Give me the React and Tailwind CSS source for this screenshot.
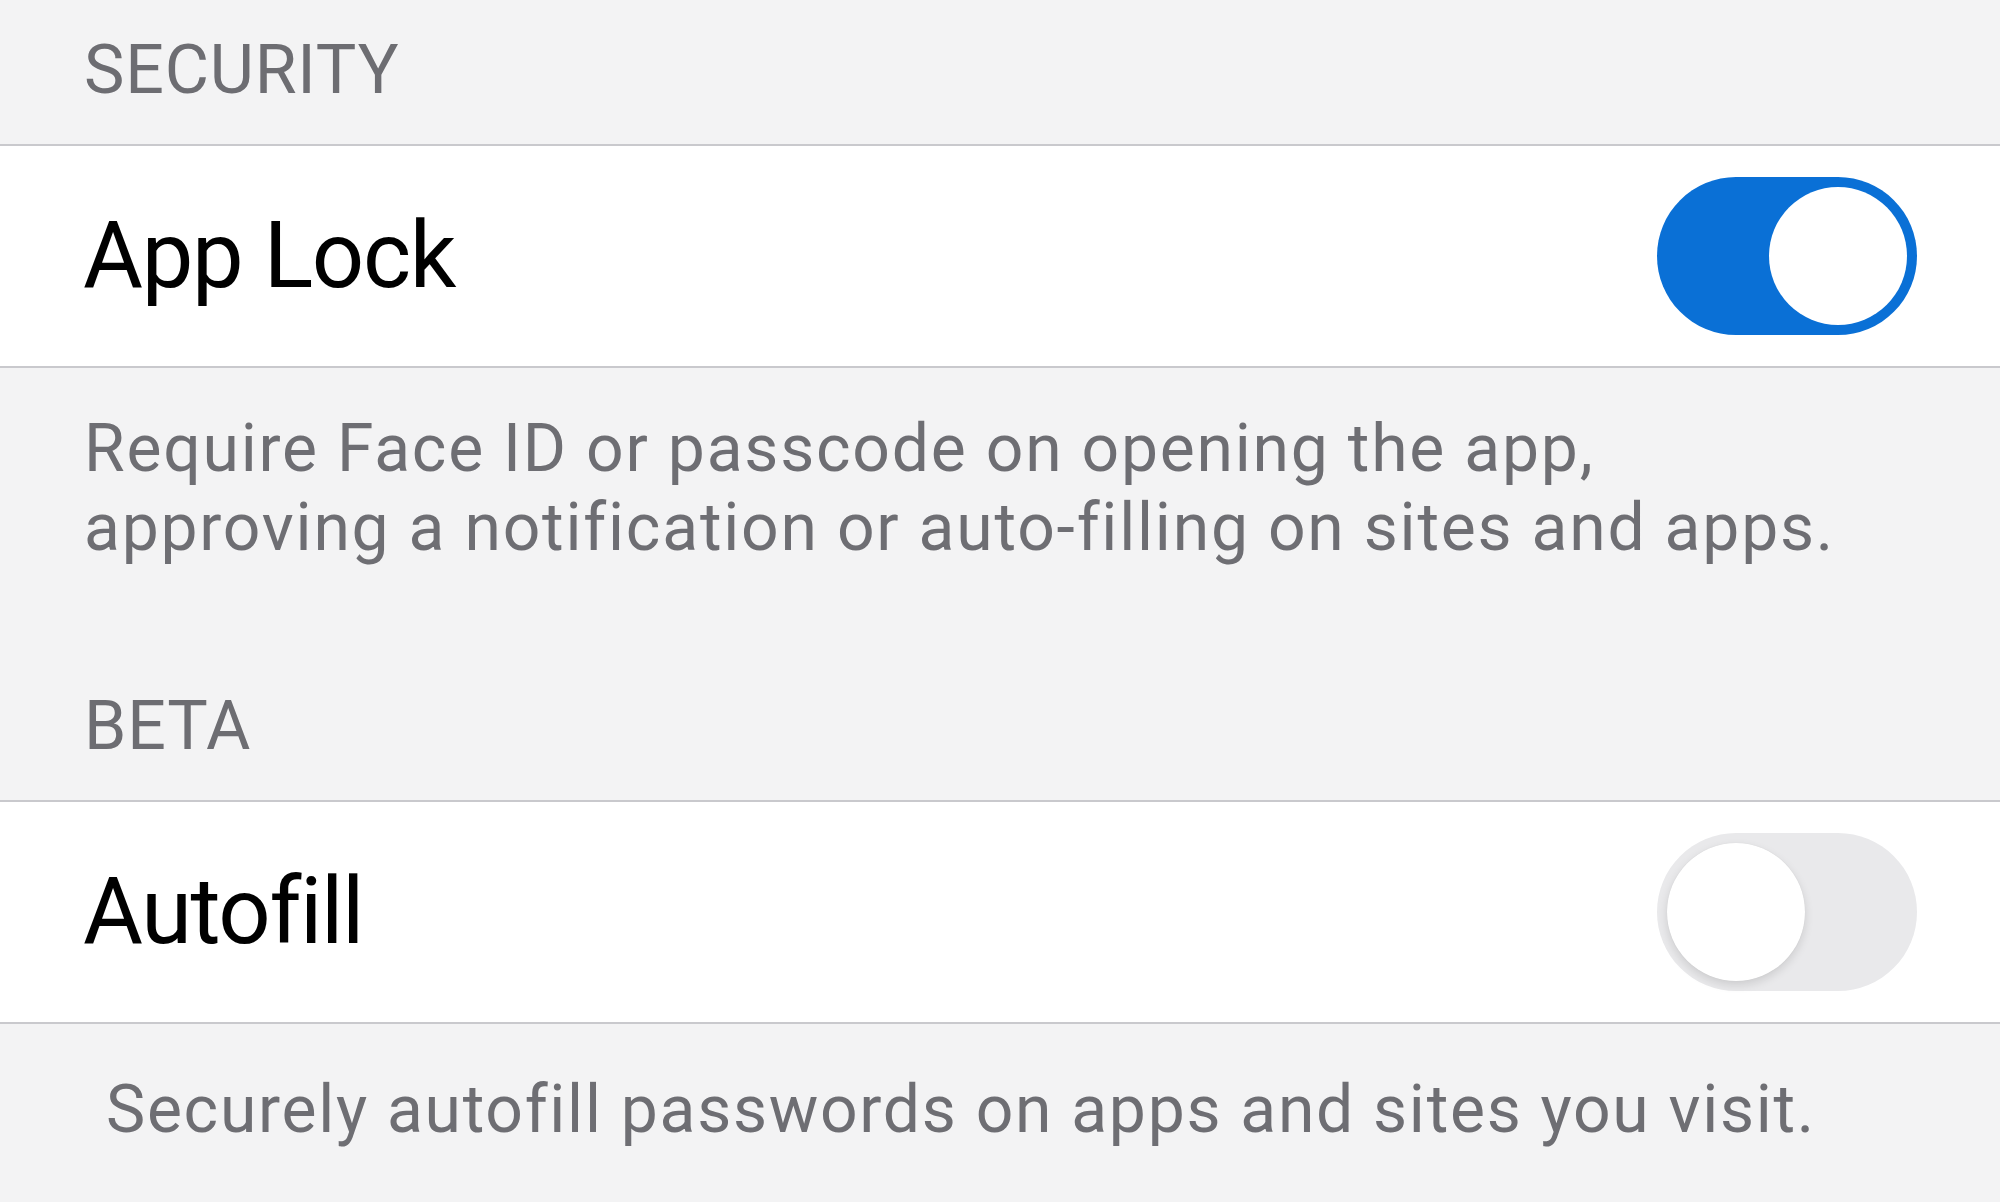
const font = { fontFamily: "Roboto, 'Liberation Sans', sans-serif" };

function Toggle({ on }) {
  return (
    <div
      className={
        "flex items-center w-[260px] h-[158px] rounded-full px-[10px] " +
        (on ? "bg-[#0a70d6] justify-end" : "bg-[#e9e9eb] justify-start")
      }
    >
      <div
        className={
          "w-[138px] h-[138px] rounded-full bg-white " +
          (on ? "" : "shadow-[0_4px_10px_rgba(0,0,0,0.12),0_0_1px_rgba(0,0,0,0.1)]")
        }
      />
    </div>
  );
}

function Row({ label, on }) {
  return (
    <div className="flex items-center justify-between h-[224px] bg-white border-y-2 border-[#c9c9cd] px-[83px]">
      <span className="text-[92px] leading-none text-black tracking-[-0.015em]">{label}</span>
      <Toggle on={on} />
    </div>
  );
}

function SectionHeader({ children, className = "" }) {
  return (
    <div className={"px-[84px] text-[68px] leading-[68px] text-[#6d6d72] tracking-[0.012em] " + className}>
      {children}
    </div>
  );
}

export default function App() {
  return (
    <div className="w-[2000px] h-[1202px] overflow-hidden bg-[#f3f3f4]" style={font}>
      <SectionHeader className="pt-[36px] pb-[40px]">SECURITY</SectionHeader>
      <Row label="App Lock" on />
      <div className="pt-[41px] pb-[125px] px-[84px] text-[66px] leading-[79px] text-[#6e6e73] tracking-[0.027em]">
        <p>Require Face ID or passcode on opening the app,</p>
        <p>approving a notification or auto-filling on sites and apps.</p>
      </div>
      <SectionHeader className="pb-[40px]">BETA</SectionHeader>
      <Row label="Autofill" />
      <div className="pt-[46px] pl-[106px] text-[66px] leading-[79px] text-[#6e6e73] tracking-[0.026em]">
        Securely autofill passwords on apps and sites you visit.
      </div>
    </div>
  );
}
